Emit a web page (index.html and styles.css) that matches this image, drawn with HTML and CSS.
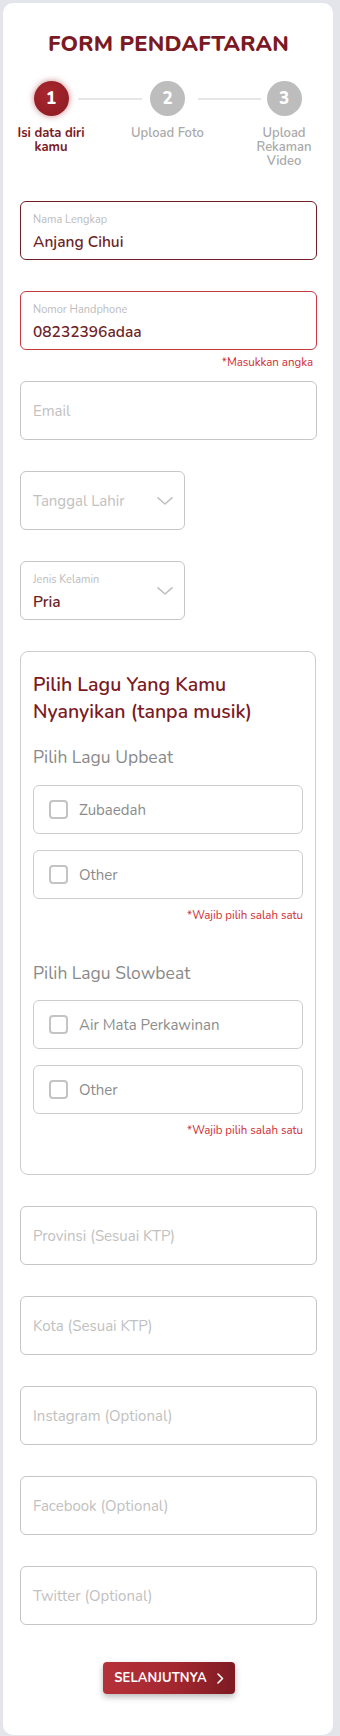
FILE: index.html
```html
<!DOCTYPE html>
<html lang="id">
<head>
<meta charset="utf-8">
<title>Form Pendaftaran</title>
<link rel="stylesheet" href="styles.css">
</head>
<body>
<main class="card">
  <h1 class="title">FORM PENDAFTARAN</h1>

  <div class="stepper">
    <div class="step step--active">
      <div class="step-circle">1</div>
      <div class="step-label step-label--narrow">Isi data diri kamu</div>
    </div>
    <div class="step-line step-line--a"></div>
    <div class="step">
      <div class="step-circle">2</div>
      <div class="step-label">Upload Foto</div>
    </div>
    <div class="step-line step-line--b"></div>
    <div class="step">
      <div class="step-circle">3</div>
      <div class="step-label step-label--narrow">Upload Rekaman Video</div>
    </div>
  </div>

  <form class="form">
    <div class="group">
      <div class="field field--filled field--focus">
        <span class="field-label">Nama Lengkap</span>
        <span class="field-value">Anjang Cihui</span>
      </div>
    </div>

    <div class="group group--error">
      <div class="field field--filled field--invalid">
        <span class="field-label">Nomor Handphone</span>
        <span class="field-value">08232396adaa</span>
      </div>
      <p class="error">*Masukkan angka</p>
    </div>

    <div class="group">
      <div class="field"><span class="placeholder">Email</span></div>
    </div>

    <div class="group">
      <div class="field field--select">
        <span class="placeholder">Tanggal Lahir</span>
        <svg class="chevron" viewBox="0 0 16 8" width="16" height="8"><polyline points="1,0.8 8,7 15,0.8"/></svg>
      </div>
    </div>

    <div class="group">
      <div class="field field--select field--filled">
        <span class="field-label">Jenis Kelamin</span>
        <span class="field-value">Pria</span>
        <svg class="chevron" viewBox="0 0 16 8" width="16" height="8"><polyline points="1,0.8 8,7 15,0.8"/></svg>
      </div>
    </div>

    <section class="songs">
      <h2 class="songs-title">Pilih Lagu Yang Kamu Nyanyikan (tanpa musik)</h2>

      <h3 class="songs-sub">Pilih Lagu Upbeat</h3>
      <div class="option"><span class="checkbox"></span><span class="option-text">Zubaedah</span></div>
      <div class="option"><span class="checkbox"></span><span class="option-text">Other</span></div>
      <p class="error error--songs">*Wajib pilih salah satu</p>

      <h3 class="songs-sub songs-sub--second">Pilih Lagu Slowbeat</h3>
      <div class="option"><span class="checkbox"></span><span class="option-text">Air Mata Perkawinan</span></div>
      <div class="option"><span class="checkbox"></span><span class="option-text">Other</span></div>
      <p class="error error--songs">*Wajib pilih salah satu</p>
    </section>

    <div class="group">
      <div class="field"><span class="placeholder">Provinsi (Sesuai KTP)</span></div>
    </div>
    <div class="group">
      <div class="field"><span class="placeholder">Kota (Sesuai KTP)</span></div>
    </div>
    <div class="group">
      <div class="field"><span class="placeholder">Instagram (Optional)</span></div>
    </div>
    <div class="group">
      <div class="field"><span class="placeholder">Facebook (Optional)</span></div>
    </div>
    <div class="group group--last">
      <div class="field"><span class="placeholder">Twitter (Optional)</span></div>
    </div>

    <div class="actions">
      <button type="button" class="btn">SELANJUTNYA
        <svg class="btn-icon" viewBox="0 0 7 11" width="7" height="11"><polyline points="1,1 5.5,5.5 1,10"/></svg>
      </button>
    </div>
  </form>
</main>
</body>
</html>
```

FILE: styles.css
```css
* { box-sizing: border-box; }

html, body {
  margin: 0;
  padding: 0;
}

body {
  background: #e4e5ea;
  font-family: "Nunito", "Lato", "Open Sans", sans-serif;
  color: #333;
}

.card {
  margin: 3px 7px 0 3px;
  background: #fff;
  border-radius: 10px;
  padding: 27px 16px 41px 17px;
}

.title {
  margin: 0;
  text-align: center;
  font-size: 22px;
  line-height: 28px;
  font-weight: 800;
  color: #7b1a24;
  letter-spacing: 0.2px;
}

/* Stepper */
.stepper {
  display: grid;
  grid-template-columns: 70px 1fr 70px 1fr 70px;
  align-items: start;
  margin: 23px -2px 0 -4px;
}

.step {
  display: flex;
  flex-direction: column;
  align-items: center;
}

.step-circle {
  width: 35px;
  height: 35px;
  border-radius: 50%;
  background: #bdbdbd;
  color: #fff;
  font-weight: 800;
  font-size: 17px;
  display: flex;
  align-items: center;
  justify-content: center;
}

.step--active .step-circle {
  background: radial-gradient(circle at 40% 35%, #a8262e, #8b1b22);
  box-shadow: 0 0 6px rgba(160, 30, 40, 0.55);
}

.step-label {
  margin-top: 10px;
  width: 84px;
  flex: none;
  text-align: center;
  font-size: 13px;
  line-height: 14px;
  font-weight: 600;
  color: #a9a9a9;
}

.step-label--narrow { width: 76px; }

.step--active .step-label {
  color: #7b1a24;
  font-weight: 700;
}

.step-line {
  height: 2px;
  background: #e6e6e6;
  margin-top: 17px;
}

.step-line--a { margin-left: -8px; margin-right: -9px; }
.step-line--b { margin-left: -5px; margin-right: -12px; }

/* Form */
.form {
  margin-top: 33px;
}

.group {
  margin-bottom: 31px;
}

.group--error {
  margin-bottom: 11px;
}

.group--last {
  margin-bottom: 37px;
}

.field {
  position: relative;
  height: 59px;
  border: 1px solid #c6c6c6;
  border-radius: 6px;
  padding: 0 12px;
  display: flex;
  flex-direction: column;
  justify-content: center;
}

.field--filled {
  justify-content: flex-start;
  padding-top: 11px;
}

.field--focus { border-color: #6e1f27; }
.field--invalid { border-color: #c63a3f; }

.field--select {
  width: 165px;
  padding-right: 40px;
}

.field-label {
  font-size: 11px;
  line-height: 14px;
  color: #bcbcbc;
}

.field-value {
  margin-top: 5px;
  font-size: 15.5px;
  line-height: 20px;
  font-weight: 600;
  color: #6e1f27;
}

.placeholder {
  font-size: 15px;
  line-height: 20px;
  color: #c1c1c1;
}

.chevron {
  position: absolute;
  right: 11px;
  top: 25px;
  fill: none;
  stroke: #c0c0c0;
  stroke-width: 1.6;
  stroke-linecap: round;
  stroke-linejoin: round;
}

.error {
  margin: 4px 4px 0 0;
  text-align: right;
  font-size: 11.5px;
  line-height: 16px;
  color: #d02c33;
}

/* Songs box */
.songs {
  border: 1px solid #cdcdcd;
  border-radius: 8px;
  padding: 19px 12px 36px 12px;
  margin: 0 1px 31px 0;
}

.songs-title {
  margin: 0;
  font-size: 19.5px;
  line-height: 27px;
  font-weight: 600;
  color: #7b1a24;
  padding-right: 30px;
}

.songs-sub {
  margin: 20px 0 16px;
  font-size: 17.5px;
  line-height: 24px;
  font-weight: 400;
  color: #8a8a8a;
}

.songs-sub--second {
  margin-top: 38px;
  margin-bottom: 15px;
}

.option {
  height: 49px;
  border: 1px solid #cdcdcd;
  border-radius: 6px;
  padding-left: 15px;
  display: flex;
  align-items: center;
  gap: 11px;
  margin-bottom: 16px;
}

.option + .error { margin-top: -8px; }

.checkbox {
  width: 19px;
  height: 19px;
  border: 2px solid #c4c4c4;
  border-radius: 4px;
  flex: none;
}

.option-text {
  font-size: 15px;
  color: #8c8c8c;
}

.error--songs {
  margin-right: 0;
}

/* Button */
.actions {
  display: flex;
  justify-content: center;
}

.btn {
  width: 132px;
  height: 32px;
  border: 0;
  border-radius: 4px;
  background: linear-gradient(100deg, #b7323a 0%, #a3272f 55%, #7c1a22 100%);
  box-shadow: 0 3px 6px rgba(0, 0, 0, 0.28);
  color: #fff;
  font-family: inherit;
  font-size: 13px;
  font-weight: 700;
  letter-spacing: 0.1px;
  display: flex;
  align-items: center;
  justify-content: center;
  gap: 10px;
  padding: 0;
  margin-left: 1px;
}

.btn-icon {
  fill: none;
  stroke: #fff;
  stroke-width: 1.6;
  stroke-linecap: round;
  stroke-linejoin: round;
}
```
